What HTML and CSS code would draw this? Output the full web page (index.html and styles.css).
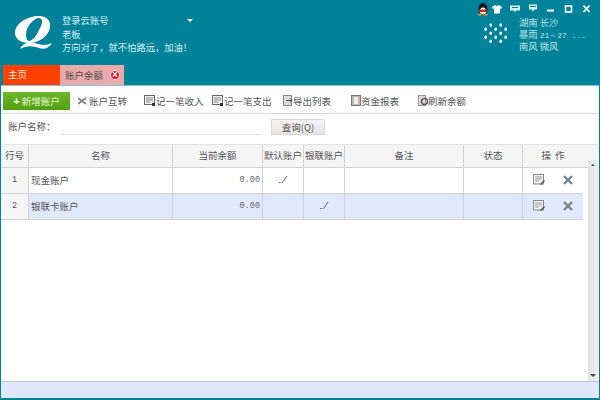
FILE: index.html
```html
<!DOCTYPE html>
<html lang="zh">
<head>
<meta charset="utf-8">
<title>账户余额</title>
<link rel="stylesheet" href="styles.css">
</head>
<body>
<div class="app">
  <header class="head">
    <div class="head-top">
      <div class="logo">
        <svg width="50" height="45" viewBox="0 0 50 45"><path fill="#fff" fill-rule="evenodd" d="M7 23C7 13 20 6 31 6C39 6 43 11 42 17C41 26 31 33 21 33C13 33 7 29 7 23ZM18 25C18 16 26 8 31 8C35 8 35 14 31 20C28 27 24 31 21 31C19 31 18 28 18 25Z"/><path fill="#fff" d="M12 39C15 33 21 31 27 33C32 35 38 36 44 33C41 38 36 40 31 38C25 36 19 35 12 39Z"/></svg>
      </div>
      <div class="user">
        <div class="user-login"><span>登录云账号</span><i class="caret"></i></div>
        <div>老板</div>
        <div>方向对了，就不怕路远，加油！</div>
      </div>
      <div class="right">
        <div class="winbar">
          <svg class="qq" width="12" height="14" viewBox="0 0 12 14"><ellipse cx="6" cy="7" rx="4.500" ry="6" fill="#1a1a1a"/><ellipse cx="6" cy="9" rx="3" ry="3.500" fill="#fff"/><path d="M2 7.500h8l-.5 2.500h-7z" fill="#e02020"/><path d="M1 12.500l3-1 .5 2H1.500zM11 12.500l-3-1-.5 2h3z" fill="#f2a010"/></svg>
          <svg width="10" height="10" viewBox="0 0 10 10"><path d="M3 1L0 3l1 2 1-.5V9.500h6V4.500l1 .5 1-2-3-2-2 1z" fill="#fff"/></svg>
          <svg width="10" height="10" viewBox="0 0 10 10"><path d="M0 1.500h10v5H6L5 8.500 4 6.500H0z" fill="#d8eef2"/><path d="M2 3.500h6" stroke="#018299"/></svg>
          <svg width="10" height="10" viewBox="0 0 10 10"><path d="M1 .5h8v5H6L5 8 4 5.500H1z" fill="#d8eef2"/><path d="M2 2.500h6" stroke="#018299"/></svg>
          <svg width="10" height="10" viewBox="0 0 10 10"><path d="M1 6.500h7" stroke="#fff" stroke-width="2"/></svg>
          <svg width="10" height="10" viewBox="0 0 10 10"><rect x="1.500" y="2" width="6" height="6" fill="none" stroke="#fff" stroke-width="1.600"/></svg>
          <svg width="10" height="10" viewBox="0 0 10 10"><path d="M1.500 1.500l6 6.500M7.500 1.500l-6 6.500" stroke="#fff" stroke-width="1.700"/></svg>
        </div>
        <div class="weather">
          <svg width="24" height="21" viewBox="0 0 24 21" fill="#fff">
            <ellipse cx="6.700" cy="2" rx="1.300" ry="1.800"/><ellipse cx="16.700" cy="2" rx="1.300" ry="1.800"/>
            <ellipse cx="1.700" cy="6.300" rx="1.300" ry="1.800"/><ellipse cx="11.700" cy="6.300" rx="1.300" ry="1.800"/><ellipse cx="21.700" cy="6.300" rx="1.300" ry="1.800"/>
            <ellipse cx="6.700" cy="10.300" rx="1.300" ry="1.800"/><ellipse cx="16.700" cy="10.300" rx="1.300" ry="1.800"/>
            <ellipse cx="1.700" cy="14.300" rx="1.300" ry="1.800"/><ellipse cx="11.700" cy="14.300" rx="1.300" ry="1.800"/><ellipse cx="21.700" cy="14.300" rx="1.300" ry="1.800"/>
            <ellipse cx="6.700" cy="18.300" rx="1.300" ry="1.800"/><ellipse cx="16.700" cy="18.300" rx="1.300" ry="1.800"/>
          </svg>
          <div class="w-text">
            <div class="w-line">湖南 长沙</div>
            <div class="w-line">暴雨 <span class="temp">21～27 ...</span></div>
            <div class="w-line">南风 微风</div>
          </div>
        </div>
      </div>
    </div>
    <div class="tabs">
      <div class="tab tab-home">主页</div>
      <div class="tab tab-cur"><span>账户余额</span><i class="tab-x">×</i></div>
    </div>
  </header>

  <main class="main">
    <div class="toolbar">
      <button class="add"><b>+</b> 新增账户</button>
      <div class="tool t1"><svg width="10" height="8" viewBox="0 0 10 8"><path d="M0 1l8 6M0 7l8-6" stroke="#8a8a8a" stroke-width="2"/></svg>账户互转</div>
      <div class="tool t2"><svg class="doc" width="12" height="12" viewBox="0 0 12 12"><rect x=".5" y=".5" width="10" height="9" fill="#eee" stroke="#666"/><path d="M2 3h7M2 5h7M2 7h4" stroke="#888"/><rect x="8" y="8" width="3" height="3" fill="#333"/></svg>记一笔收入</div>
      <div class="tool t3"><svg class="doc" width="12" height="12" viewBox="0 0 12 12"><rect x=".5" y=".5" width="10" height="9" fill="#eee" stroke="#666"/><path d="M2 3h7M2 5h7M2 7h4" stroke="#888"/><rect x="8" y="8" width="3" height="3" fill="#333"/></svg>记一笔支出</div>
      <div class="tool t4"><svg width="10" height="11" viewBox="0 0 10 11"><rect x=".5" y=".5" width="8" height="10" fill="#ddd" stroke="#888"/><path d="M3 5.500h6M7 3.500l2 2-2 2" stroke="#555" fill="none"/></svg>导出列表</div>
      <div class="tool t5"><svg width="10" height="11" viewBox="0 0 10 11"><rect x=".5" y=".5" width="9" height="10" fill="#bbb" stroke="#777"/><rect x="3" y="2" width="4" height="7" fill="#eee"/></svg>资金报表</div>
      <div class="tool t6"><svg width="10" height="11" viewBox="0 0 10 11"><rect x=".5" y=".5" width="7" height="10" fill="#ddd" stroke="#999"/><circle cx="6.500" cy="6.500" r="3" fill="none" stroke="#555" stroke-width="1.500"/></svg>刷新余额</div>
    </div>
    <div class="search">
      <label>账户名称：</label>
      <div class="input"></div>
      <button class="query">查询(Q)</button>
    </div>
    <div class="grid">
      <div class="row row-head">
        <div>行号</div><div>名称</div><div>当前余额</div><div>默认账户</div><div>银联账户</div><div>备注</div><div>状态</div><div class="head-ops">操 作</div>
      </div>
      <div class="row row-body">
        <div class="num">1</div><div class="left">现金账户</div><div class="amt">0.00</div>
        <div><svg width="10" height="9" viewBox="0 0 10 9"><path d="M1 7.500h1.500M3.500 7.500h1L9 1" fill="none" stroke="#666"/></svg></div>
        <div></div><div></div><div></div>
        <div class="ops">
          <svg width="12" height="12" viewBox="0 0 12 12"><rect x=".5" y=".5" width="10" height="9.500" fill="#f4f4f4" stroke="#888"/><path d="M2 3h7M2 5h7M2 7h4" stroke="#999"/><path d="M7 10l4-4 1 1-4 4z" fill="#555"/></svg>
          <svg width="10" height="10" viewBox="0 0 10 10"><path d="M1 1l8 8M9 1l-8 8" stroke="#7a8088" stroke-width="2.400"/></svg>
        </div>
      </div>
      <div class="row row-body row-sel">
        <div class="num">2</div><div class="left">银联卡账户</div><div class="amt">0.00</div>
        <div></div>
        <div><svg width="10" height="9" viewBox="0 0 10 9"><path d="M1 7.500h1.500M3.500 7.500h1L9 1" fill="none" stroke="#666"/></svg></div>
        <div></div><div></div>
        <div class="ops">
          <svg width="12" height="12" viewBox="0 0 12 12"><rect x=".5" y=".5" width="10" height="9.500" fill="#f4f4f4" stroke="#888"/><path d="M2 3h7M2 5h7M2 7h4" stroke="#999"/><path d="M7 10l4-4 1 1-4 4z" fill="#555"/></svg>
          <svg width="10" height="10" viewBox="0 0 10 10"><path d="M1 1l8 8M9 1l-8 8" stroke="#7a8088" stroke-width="2.400"/></svg>
        </div>
      </div>
      <div class="scroll"><i class="up"></i><i class="down"></i></div>
    </div>
    <div class="foot"></div>
  </main>
</div>
</body>
</html>
```
FILE: styles.css
```css
* { box-sizing: border-box; }
html, body { margin: 0; padding: 0; }
body { width: 600px; height: 400px; overflow: hidden; font-family: "Noto Sans CJK SC", "Liberation Sans", sans-serif; font-size: 9.500px; color: #555; }
.app { width: 600px; height: 400px; display: flex; flex-direction: column; background: #018299; padding: 0 1px 2px 1px; }

.head { height: 85px; flex: none; display: flex; flex-direction: column; color: #d4eef3; }
.head-top { flex: 1; display: flex; min-height: 0; }
.logo { width: 61px; padding: 10px 0 0 7px; }
.user { padding-top: 14px; line-height: 13.500px; flex: 1; font-size: 9.300px; }
.user-login { display: flex; width: 131px; justify-content: space-between; align-items: center; }
.caret { width: 0; height: 0; border: 3px solid transparent; border-top-color: #fff; border-bottom: 0; }
.right { width: 160px; margin-left: auto; }
.winbar { display: flex; align-items: center; height: 17px; padding: 1px 3px 0 38px; gap: 8px; }
.winbar .qq { margin-right: -5px; }
.weather { display: flex; align-items: flex-start; padding-left: 45px; gap: 11px; margin-top: -1px; }
.weather svg { margin-top: 7px; }
.w-text { color: #bfe3ea; font-size: 9.300px; white-space: nowrap; }
.w-line { height: 12px; line-height: 12px; overflow: hidden; }
.temp { font-family: "Liberation Mono", monospace; font-size: 8px; }

.tabs { height: 20px; display: flex; padding-left: 2px; flex: none; }
.tab { height: 20px; line-height: 18px; }
.tab-home { width: 57px; background: #ff4000; color: #ffe8d8; padding-left: 5px; }
.tab-cur { width: 64px; background: #e8abac; color: #5a4a4a; padding-left: 5px; display: flex; align-items: center; gap: 7px; }
.tab-x { width: 10px; height: 10px; border-radius: 50%; background: #e8102a; color: #fff; font: bold 10px/9px "Liberation Sans", sans-serif; text-align: center; box-shadow: 0 0 0 1px #fff inset; }

.main { flex: 1; background: #fff; display: flex; flex-direction: column; border-top: 1px solid #7fc6d6; min-height: 0; }
.toolbar { height: 28px; flex: none; display: flex; align-items: center; border-bottom: 1px solid #dcdcdc; padding: 2px 0 0 2px; }
.add { width: 67px; height: 18px; border: 0; padding: 0; background: linear-gradient(#6db72a, #52a010); color: #e6f6d4; font: 9.500px/18px "Noto Sans CJK SC", sans-serif; }
.add b { color: #fff; font: bold 11px/18px "Liberation Sans", sans-serif; }
.tool { display: flex; align-items: center; color: #555; white-space: nowrap; }
.t1 { margin-left: 8px; width: 66px; }
.t2 { width: 68px; }
.t3 { width: 71px; }
.t4 { width: 68px; }
.t5 { width: 67px; }
.t6 { width: 62px; }
.t1 svg { margin-right: 1px; }
.search { height: 30px; flex: none; display: flex; align-items: flex-start; padding: 5px 0 0 7px; color: #555; }
.search label { width: 53px; line-height: 14px; }
.input { width: 200px; height: 1px; background: #e0e0e0; margin-top: 15px; }
.query { margin-left: 10px; width: 54px; height: 16px; padding: 0; background: linear-gradient(#f4f4f4, #e4e4e4); border: 1px solid #d8d8d8; color: #555; font: 9.500px/14px "Noto Sans CJK SC", sans-serif; }

.grid { flex: 1; position: relative; min-height: 0; border-top: 1px solid #e2e2e2; }
.row { display: grid; grid-template-columns: 28px 144px 90px 41px 41px 119px 59px 60px; }
.row > div { display: flex; align-items: center; justify-content: center; border-right: 1px solid #d2d2d2; padding-bottom: 2px; }
.row-head { height: 23px; background: #f5f5f5; border-bottom: 1px solid #d2d2d2; grid-template-columns: 28px 144px 90px 41px 41px 119px 59px 1fr; }
.row-head > .head-ops { border-right: 0; padding-right: 16px; word-spacing: 2px; }
.row-body { height: 26px; width: 582px; border-bottom: 1px solid #d2d2d2; background: #fff; }
.row-sel { background: #dfe9fb; }
.row-body .num { background: #f5f5f5; font-family: "Liberation Mono", monospace; font-size: 8.500px; }
.row-body .left { justify-content: flex-start; padding-left: 2px; }
.row-body .amt { justify-content: flex-end; padding-right: 2px; font-family: "Liberation Mono", monospace; font-size: 8.500px; color: #666; }
.row-body .ops { border-right: 0; justify-content: flex-start; padding-left: 10px; gap: 18px; }

.scroll { position: absolute; right: 1px; top: 15px; bottom: 0; width: 10px; background: linear-gradient(to right, #e2e2e2, #efefef); display: flex; flex-direction: column; justify-content: space-between; align-items: center; padding: 4px 0; }
.up { border: 2px solid transparent; border-bottom-color: #444; border-top: 0; }
.down { border: 3px solid transparent; border-top-color: #444; border-bottom: 0; }

.foot { height: 17px; flex: none; background: #dfe8fb; border-top: 1px solid #c8c8c8; }
```
